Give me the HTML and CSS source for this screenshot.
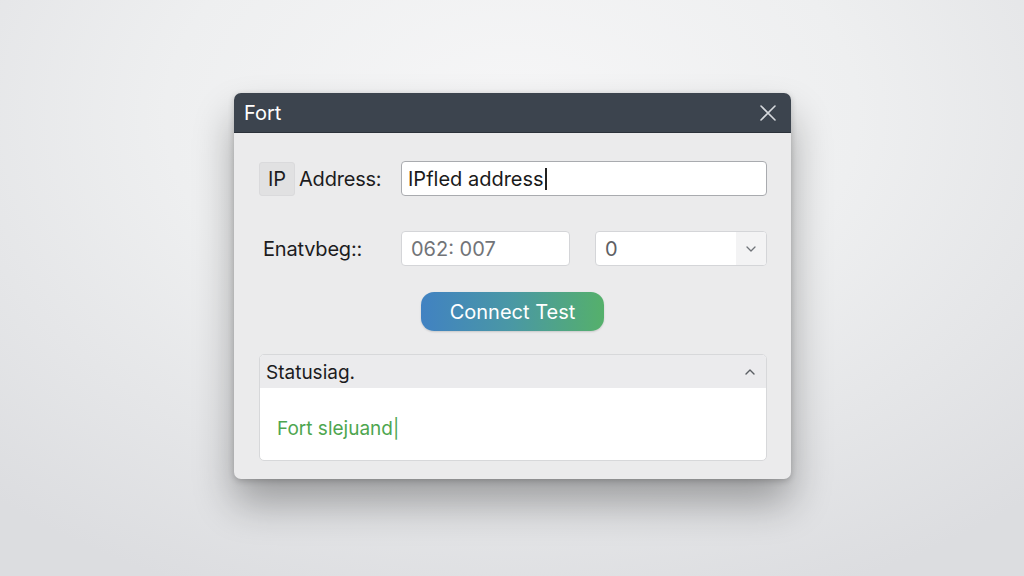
FILE: index.html
```html
<!DOCTYPE html>
<html lang="en">
<head>
<meta charset="utf-8">
<title>Fort</title>
<link rel="stylesheet" href="styles.css">
</head>
<body>
<main class="stage">
  <section class="dialog">
    <header class="titlebar">
      <h1 class="title">Fort</h1>
      <button class="close" aria-label="Close">
        <svg width="18" height="18" viewBox="0 0 18 18"><path d="M2 2L16 16M16 2L2 16" stroke="#d6d9dd" stroke-width="1.6" stroke-linecap="round"/></svg>
      </button>
    </header>
    <div class="body">
      <div class="row row-ip">
        <div class="label-group"><span class="chip">IP</span><span class="label">Address:</span></div>
        <div class="field field-wide">IPfled address<span class="caret"></span></div>
      </div>
      <div class="row row-port">
        <div class="label-group"><span class="label label-port">Enatvbeg::</span></div>
        <div class="field field-num">062: 007</div>
        <div class="select">
          <span class="select-value">0</span>
          <span class="select-arrow">
            <svg width="12" height="8" viewBox="0 0 12 8"><path d="M2 2L6 6L10 2" stroke="#707479" stroke-width="1.3" fill="none" stroke-linecap="round" stroke-linejoin="round"/></svg>
          </span>
        </div>
      </div>
      <div class="actions">
        <button class="connect">Connect Test</button>
      </div>
      <div class="status">
        <div class="status-head">
          <span>Statusiag.</span>
          <svg width="12" height="8" viewBox="0 0 12 8"><path d="M2 6L6 2L10 6" stroke="#5a5e63" stroke-width="1.4" fill="none" stroke-linecap="round" stroke-linejoin="round"/></svg>
        </div>
        <div class="status-body">Fort slejuand|</div>
      </div>
    </div>
  </section>
</main>
</body>
</html>
```

FILE: styles.css
```css
* { box-sizing: border-box; }

html, body {
  margin: 0;
  height: 100%;
}

body {
  font-family: "Inter", "Liberation Sans", sans-serif;
  background: radial-gradient(ellipse 75% 90% at 50% 20%, #f6f6f7 0%, #eeeff0 45%, #dcdde0 100%);
  overflow: hidden;
}

.stage {
  height: 100%;
  display: flex;
  justify-content: center;
  padding-top: 93px;
  padding-left: 1px;
}

.dialog {
  width: 557px;
  height: 386px;
  background: #ebebec;
  border-radius: 7px;
  overflow: hidden;
  box-shadow: 0 24px 40px rgba(0, 0, 0, 0.32), 0 2px 6px rgba(0, 0, 0, 0.2);
  display: flex;
  flex-direction: column;
}

.titlebar {
  height: 40px;
  background: #3c444e;
  display: flex;
  align-items: center;
  justify-content: space-between;
  padding: 0 14px 0 10px;
  border-bottom: 1px solid #2c323a;
}

.title {
  margin: 0;
  font-size: 20px;
  font-weight: 400;
  color: #ffffff;
  letter-spacing: 0;
}

.close {
  border: 0;
  background: none;
  padding: 0;
  display: flex;
}

.body {
  padding: 28px 24px 0 25px;
  display: flex;
  flex-direction: column;
}

.row {
  display: flex;
  align-items: center;
}

.row-port {
  margin-top: 35px;
}

.label-group {
  width: 142px;
  display: flex;
  align-items: center;
  gap: 4px;
}

.chip {
  width: 36px;
  height: 34px;
  background: #e1e1e2;
  border: 1px solid #dadadc;
  border-radius: 3px;
  display: flex;
  align-items: center;
  justify-content: center;
  font-size: 20px;
  color: #1c1c1e;
}

.label {
  font-size: 20px;
  color: #1c1c1e;
  letter-spacing: -0.2px;
}

.label-port {
  padding-left: 4px;
}

.field {
  height: 35px;
  background: #fff;
  border: 1px solid #c9cacd;
  border-radius: 4px;
  display: flex;
  align-items: center;
  padding-left: 6px;
  font-size: 20px;
}

.field-wide {
  flex: 1;
  border-color: #a9abaf;
  color: #1a1a1a;
}

.caret {
  width: 2px;
  height: 22px;
  background: #222;
  margin-left: 1px;
}

.field-num {
  width: 169px;
  color: #727478;
  padding-left: 9px;
  border-color: #d4d5d8;
}

.select {
  width: 172px;
  height: 35px;
  margin-left: 25px;
  background: #fff;
  border: 1px solid #d4d5d8;
  border-radius: 4px;
  display: flex;
  align-items: center;
  overflow: hidden;
}

.select-value {
  flex: 1;
  padding-left: 9px;
  font-size: 20px;
  color: #5e6064;
}

.select-arrow {
  width: 30px;
  height: 100%;
  background: #f3f3f4;
  display: flex;
  align-items: center;
  justify-content: center;
}

.actions {
  display: flex;
  justify-content: center;
  margin-top: 26px;
  padding-right: 1px;
}

.connect {
  width: 183px;
  height: 39px;
  border: 0;
  border-radius: 13px;
  background: linear-gradient(90deg, #4182c2 0%, #4a98a4 50%, #55b06b 100%);
  color: #fff;
  font-family: inherit;
  font-size: 20px;
  letter-spacing: 0;
  box-shadow: 0 1px 2px rgba(0, 0, 0, 0.15);
}

.status {
  margin-top: 23px;
  border: 1px solid #d7d8da;
  border-radius: 5px;
  overflow: hidden;
  background: #fff;
}

.status-head {
  height: 33px;
  background: #ebebed;
  display: flex;
  align-items: center;
  justify-content: space-between;
  padding: 1px 10px 0 6px;
  font-size: 19px;
  color: #1c1c1e;
}

.status-body {
  height: 72px;
  padding: 29px 0 0 17px;
  font-size: 19px;
  color: #4ea64f;
}
```
